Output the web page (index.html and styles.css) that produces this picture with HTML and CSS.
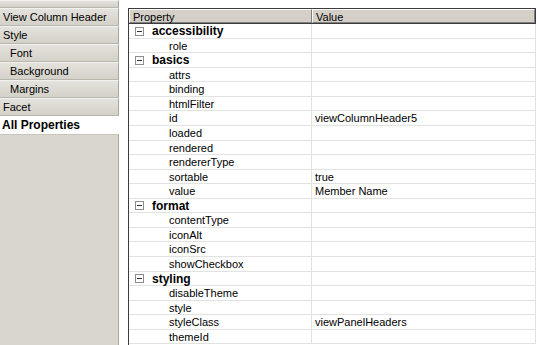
FILE: index.html
```html
<html>
    <head>
        <meta charset="UTF-8">
        <title>All Properties</title>
        <link rel="stylesheet" href="styles.css">
    </head>
    <body>
        <div id="page">
          <div id="nav">
            <div class="navitem stub"></div>
            <div class="navitem">View Column Header</div>
            <div class="navitem">Style</div>
            <div class="navitem sub">Font</div>
            <div class="navitem sub">Background</div>
            <div class="navitem sub">Margins</div>
            <div class="navitem">Facet</div>
            <div class="navitem current">All Properties</div>
            <div id="navrest"></div>
          </div>
          <div id="props">
            <div class="head">
              <div class="hcell">Property</div>
              <div class="hcell">Value</div>
            </div>
            <div class="row group"><div class="name"><span class="tog"></span>accessibility</div><div class="val"></div></div>
            <div class="row"><div class="name">role</div><div class="val"></div></div>
            <div class="row group"><div class="name"><span class="tog"></span>basics</div><div class="val"></div></div>
            <div class="row"><div class="name">attrs</div><div class="val"></div></div>
            <div class="row"><div class="name">binding</div><div class="val"></div></div>
            <div class="row"><div class="name">htmlFilter</div><div class="val"></div></div>
            <div class="row"><div class="name">id</div><div class="val">viewColumnHeader5</div></div>
            <div class="row"><div class="name">loaded</div><div class="val"></div></div>
            <div class="row"><div class="name">rendered</div><div class="val"></div></div>
            <div class="row"><div class="name">rendererType</div><div class="val"></div></div>
            <div class="row"><div class="name">sortable</div><div class="val">true</div></div>
            <div class="row"><div class="name">value</div><div class="val">Member Name</div></div>
            <div class="row group"><div class="name"><span class="tog"></span>format</div><div class="val"></div></div>
            <div class="row"><div class="name">contentType</div><div class="val"></div></div>
            <div class="row"><div class="name">iconAlt</div><div class="val"></div></div>
            <div class="row"><div class="name">iconSrc</div><div class="val"></div></div>
            <div class="row"><div class="name">showCheckbox</div><div class="val"></div></div>
            <div class="row group"><div class="name"><span class="tog"></span>styling</div><div class="val"></div></div>
            <div class="row"><div class="name">disableTheme</div><div class="val"></div></div>
            <div class="row"><div class="name">style</div><div class="val"></div></div>
            <div class="row"><div class="name">styleClass</div><div class="val">viewPanelHeaders</div></div>
            <div class="row"><div class="name">themeId</div><div class="val"></div></div>
          </div>
        </div>
    </body>
</html>
```

FILE: styles.css
```css
body {
    margin: 0;
    background: #ffffff;
    font-family: "Liberation Sans", Arial, sans-serif;
    font-size: 11px;
    color: #000000;
}
#page {
    display: flex;
    height: 345px;
    overflow: hidden;
}
#nav {
    width: 119px;
    display: flex;
    flex-direction: column;
    flex-shrink: 0;
}
.navitem {
    box-sizing: border-box;
    height: 18px;
    line-height: 16px;
    padding-left: 3px;
    background: linear-gradient(#e4e2dc, #d4d1c9);
    border-top: 1px solid #f2f1ed;
    border-bottom: 1px solid #b9b6ae;
    border-right: 1px solid #a8a59e;
    white-space: nowrap;
}
.stub {
    height: 8px;
}
.sub {
    padding-left: 10px;
}
.current {
    background: #ffffff;
    border-color: #ffffff;
    font-weight: bold;
    font-size: 12px;
    padding-left: 2px;
}
#navrest {
    flex: 1;
    background: #d8d6cf;
    border-top: 1px solid #c8c5bd;
    border-right: 1px solid #a8a59e;
}
#props {
    margin-left: 9px;
    margin-top: 8px;
    width: 407px;
    flex-shrink: 0;
    border-left: 1px solid #3c3c3c;
}
.head {
    display: grid;
    grid-template-columns: 183px 1fr;
    height: 16px;
    box-sizing: border-box;
    border: 1px solid #3c3c3c;
    border-left: none;
    background: #d4d0c8;
}
.hcell {
    line-height: 14px;
    padding-left: 3px;
    border-left: 1px solid #ffffff;
    border-top: 1px solid #ffffff;
    border-right: 1px solid #808080;
    border-bottom: 1px solid #808080;
    box-sizing: border-box;
    height: 14px;
}
.row {
    display: grid;
    grid-template-columns: 183px 1fr;
    height: 14.57px;
    box-sizing: border-box;
    border-bottom: 1px solid #e2e2e2;
    border-right: 1px solid #e2e2e2;
}
.name, .val {
    line-height: 14px;
    white-space: nowrap;
}
.name {
    padding-left: 40px;
    border-right: 1px solid #e2e2e2;
}
.val {
    padding-left: 3px;
}
.group .name {
    padding-left: 6px;
    font-weight: bold;
    font-size: 12px;
    display: flex;
    align-items: center;
}
.tog {
    width: 7px;
    height: 7px;
    border: 1px solid #8c8c8c;
    margin-right: 8px;
    position: relative;
    flex-shrink: 0;
}
.tog::after {
    content: "";
    position: absolute;
    left: 1px;
    top: 3px;
    width: 5px;
    height: 1px;
    background: #333333;
}
```
